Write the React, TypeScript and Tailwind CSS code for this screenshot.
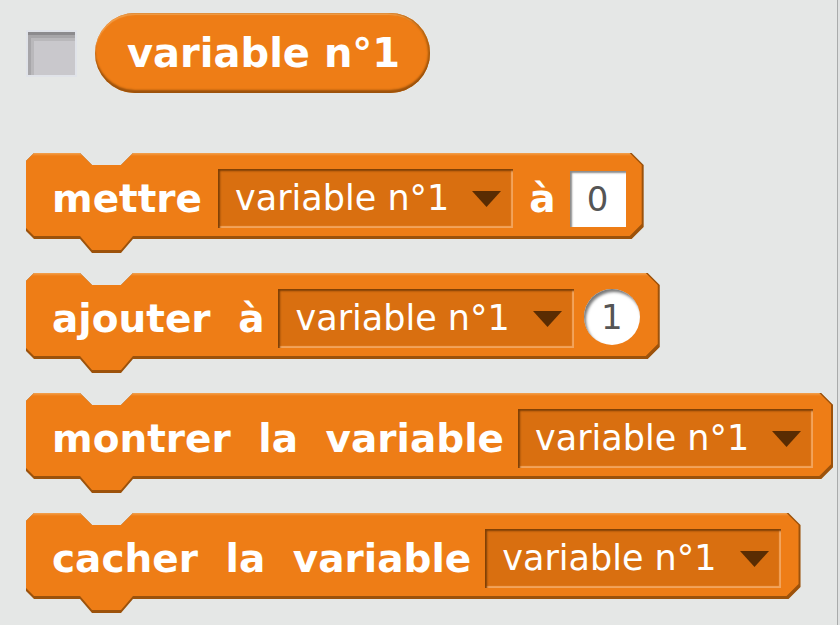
const bold = "font-['DejaVu_Sans',Verdana,sans-serif] font-bold";
const regular = "font-['DejaVu_Sans',Verdana,sans-serif] font-normal";

const shape =
  "[clip-path:polygon(0_8px,8px_0,54px_0,66px_12px,95px_12px,107px_0,calc(100%_-_12px)_0,100%_12px,100%_calc(100%_-_26px),calc(100%_-_12px)_calc(100%_-_14px),107px_calc(100%_-_14px),95px_100%,66px_100%,54px_calc(100%_-_14px),8px_calc(100%_-_14px),0_calc(100%_-_22px))]";

const Label = ({ children }: { children: React.ReactNode }) => (
  <span className={`${bold} text-[39px] leading-none text-white [word-spacing:14px] whitespace-nowrap`}>
    {children}
  </span>
);

const Dropdown = () => (
  <div className="flex items-center h-[59px] pl-[17px] pr-[12px] gap-[23px] bg-[#d96f10] shadow-[inset_2px_2px_2px_#7d3f06,inset_-2px_-2px_1px_#f2a45c]">
    <span className={`${regular} text-[35px] leading-none text-white whitespace-nowrap`}>variable n°1</span>
    <svg width="29" height="16" viewBox="0 0 29 16">
      <polygon points="0,0 29,0 14.5,16" fill="#5a2c02" />
    </svg>
  </div>
);

const Block = ({ children, gap = "gap-[16px]", pr = "pr-[19px]" }: { children: React.ReactNode; gap?: string; pr?: string }) => (
  <div className="relative self-start">
    <div className={`absolute inset-0 bg-[#9c520b] ${shape}`} />
    <div
      className={`absolute left-0 top-0 right-[2px] bottom-[3px] bg-[linear-gradient(#f3a14e_0,#ee7d16_3px,#ee7d16_100%)] ${shape}`}
    />
    <div className={`relative flex items-center ${gap} h-[86px] pl-[26px] ${pr} pt-[5px] mb-[14px]`}>
      {children}
    </div>
  </div>
);

const App = () => {
  return (
    <div className="flex w-[840px] h-[625px] bg-[#e5e7e6] overflow-hidden">
      <div className="flex-1 flex flex-col pl-[26px] pt-[13px]">
        <div className="flex items-center gap-[18px]">
          <div className="w-[51px] h-[47px] border-2 border-[#e0e3e9] bg-[#c9c8cc] shadow-[inset_0_3px_0_#8c8b8e,inset_3px_6px_0_#a7a6a9,inset_6px_9px_0_#b9b8bb]" />
          <div className="flex items-center h-[80px] pl-[32px] pr-[30px] rounded-full bg-[#ee7d16] shadow-[inset_0_-3px_2px_#9c520b,inset_-2px_0_2px_#b0600e,inset_0_2px_1px_#f3a04c]">
            <span className={`${bold} text-[40px] leading-none text-white whitespace-nowrap`}>variable n°1</span>
          </div>
        </div>

        <div className="flex flex-col gap-[20px] mt-[60px]">
          <Block gap="gap-[16px]" pr="pr-[18px]">
            <Label>mettre</Label>
            <Dropdown />
            <Label>à</Label>
            <div className="flex items-center justify-center w-[56px] h-[56px] -ml-[2px] bg-white shadow-[inset_2px_2px_2px_#8a8a8a]">
              <span className={`${regular} text-[34px] leading-none text-[#555555]`}>0</span>
            </div>
          </Block>

          <Block pr="pr-[20px]">
            <Label>ajouter à</Label>
            <div className="flex items-center gap-[10px] -ml-[2px]">
              <Dropdown />
              <div className="flex items-center justify-center w-[56px] h-[56px] -mt-[4px] rounded-full bg-white shadow-[inset_2px_3px_3px_#7a7a7a]">
                <span className={`${regular} text-[34px] leading-none text-[#555555]`}>1</span>
              </div>
            </div>
          </Block>

          <Block gap="gap-[14px]" pr="pr-[20px]">
            <Label>montrer la variable</Label>
            <Dropdown />
          </Block>

          <Block gap="gap-[14px]" pr="pr-[20px]">
            <Label>cacher la variable</Label>
            <Dropdown />
          </Block>
        </div>
      </div>
      <div className="w-px bg-[#a9abab]" />
      <div className="w-[2px] bg-[#e0e2e2]" />
    </div>
  );
};

export default App;
